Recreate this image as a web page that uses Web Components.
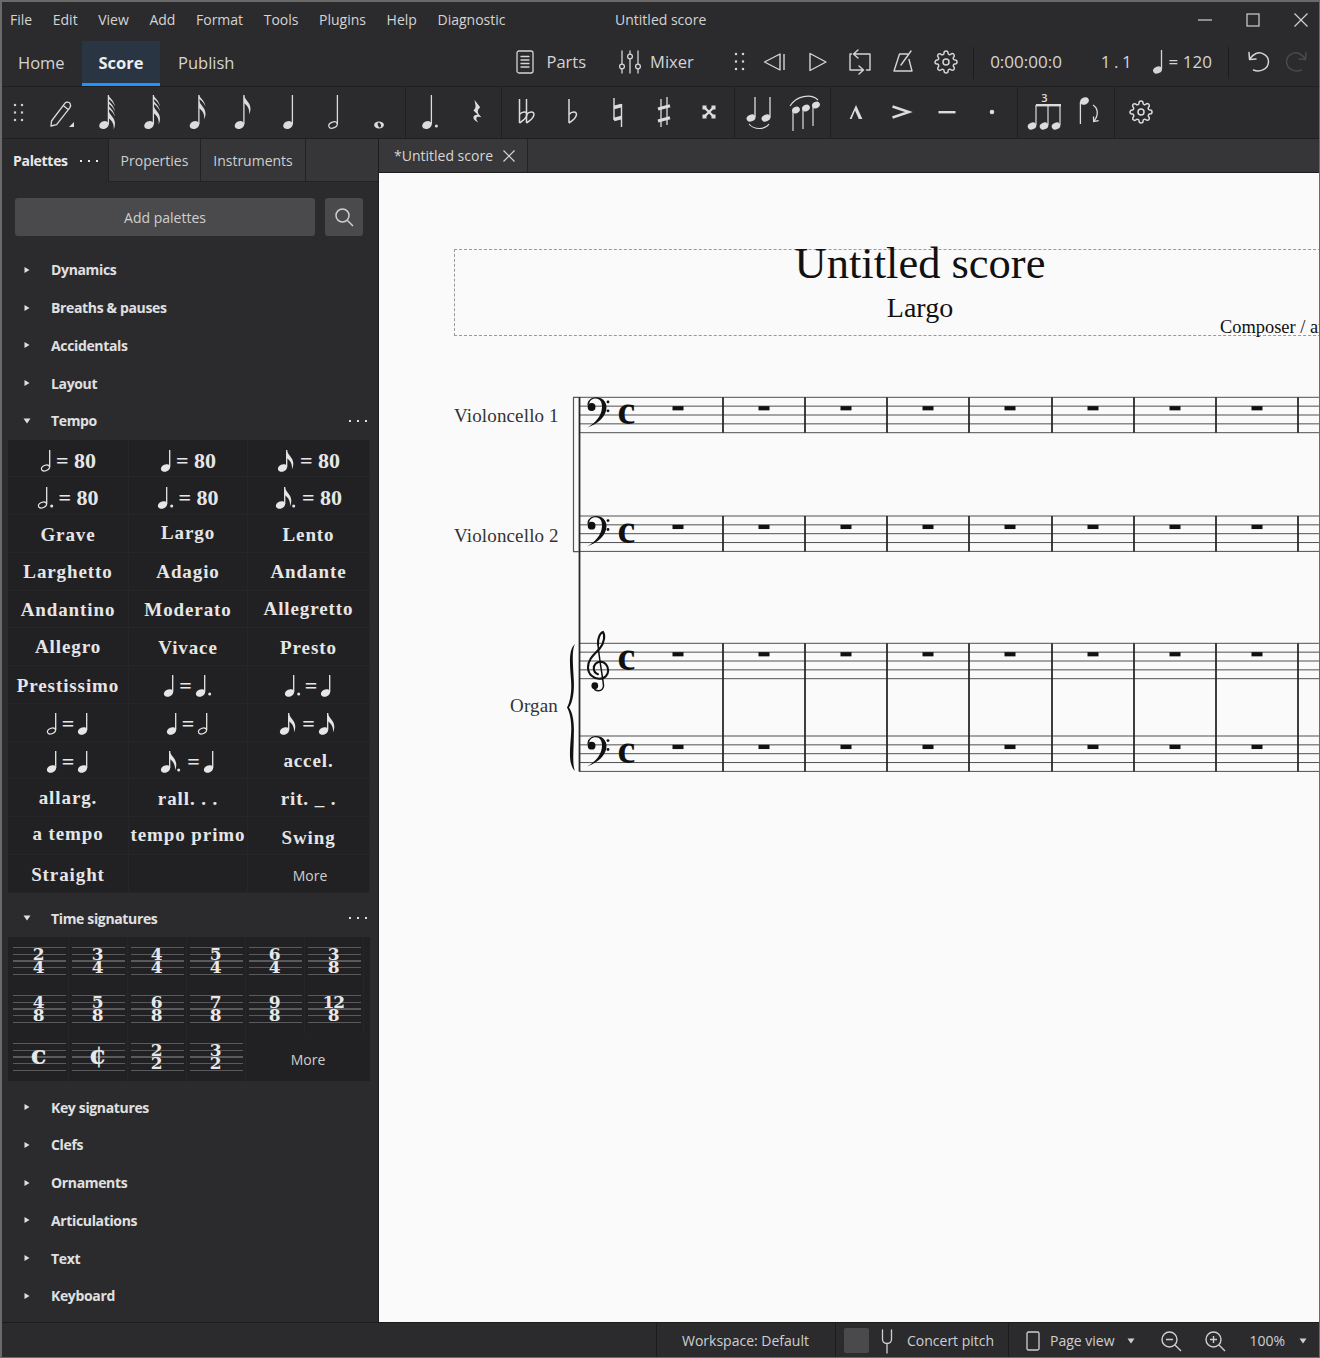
<!DOCTYPE html>
<html><head><meta charset="utf-8"><title>Untitled score</title>
<style>
html,body{margin:0;padding:0;background:#2b2b2e}
body{font-family:"Open Sans","Noto Sans",sans-serif;color:#d6d6d6}
</style></head>
<body>
<ms-app>
  <ms-menubar></ms-menubar>
  <ms-navbar></ms-navbar>
  <ms-toolbar></ms-toolbar>
  <ms-main>
    <ms-palettes slot="left">
      <ms-palette label="Dynamics"></ms-palette>
      <ms-palette label="Breaths &amp; pauses"></ms-palette>
      <ms-palette label="Accidentals"></ms-palette>
      <ms-palette label="Layout"></ms-palette>
      <ms-palette label="Tempo" open>
        <ms-tempo-grid>
          <ms-tempo-cell dy="3"><ms-icon name="th"></ms-icon>= 80</ms-tempo-cell>
          <ms-tempo-cell dy="3"><ms-icon name="tq"></ms-icon>= 80</ms-tempo-cell>
          <ms-tempo-cell dy="3"><ms-icon name="t8"></ms-icon>= 80</ms-tempo-cell>
          <ms-tempo-cell dy="2"><ms-icon name="thd"></ms-icon>= 80</ms-tempo-cell>
          <ms-tempo-cell dy="2"><ms-icon name="tqd"></ms-icon>= 80</ms-tempo-cell>
          <ms-tempo-cell dy="2"><ms-icon name="t8d"></ms-icon>= 80</ms-tempo-cell>
          <ms-tempo-cell word dy="1">Grave</ms-tempo-cell>
          <ms-tempo-cell word dy="-1">Largo</ms-tempo-cell>
          <ms-tempo-cell word dy="1">Lento</ms-tempo-cell>
          <ms-tempo-cell word>Larghetto</ms-tempo-cell>
          <ms-tempo-cell word>Adagio</ms-tempo-cell>
          <ms-tempo-cell word>Andante</ms-tempo-cell>
          <ms-tempo-cell word dy="1">Andantino</ms-tempo-cell>
          <ms-tempo-cell word dy="1">Moderato</ms-tempo-cell>
          <ms-tempo-cell word>Allegretto</ms-tempo-cell>
          <ms-tempo-cell word>Allegro</ms-tempo-cell>
          <ms-tempo-cell word dy="1">Vivace</ms-tempo-cell>
          <ms-tempo-cell word dy="1">Presto</ms-tempo-cell>
          <ms-tempo-cell word dy="1">Prestissimo</ms-tempo-cell>
          <ms-tempo-cell dy="2"><ms-icon name="tq"></ms-icon>=<ms-icon name="tqd"></ms-icon></ms-tempo-cell>
          <ms-tempo-cell dy="2"><ms-icon name="tqd"></ms-icon>=<ms-icon name="tq"></ms-icon></ms-tempo-cell>
          <ms-tempo-cell dy="2"><ms-icon name="th"></ms-icon>=<ms-icon name="tq"></ms-icon></ms-tempo-cell>
          <ms-tempo-cell dy="2"><ms-icon name="tq"></ms-icon>=<ms-icon name="th"></ms-icon></ms-tempo-cell>
          <ms-tempo-cell dy="2"><ms-icon name="t8"></ms-icon>=<ms-icon name="t8"></ms-icon></ms-tempo-cell>
          <ms-tempo-cell dy="2"><ms-icon name="tq"></ms-icon>=<ms-icon name="tq"></ms-icon></ms-tempo-cell>
          <ms-tempo-cell dy="2"><ms-icon name="t8d"></ms-icon>=<ms-icon name="tq"></ms-icon></ms-tempo-cell>
          <ms-tempo-cell word dy="1">accel.</ms-tempo-cell>
          <ms-tempo-cell word>allarg.</ms-tempo-cell>
          <ms-tempo-cell word dy="1">rall. . .</ms-tempo-cell>
          <ms-tempo-cell word dy="1">rit. _ .</ms-tempo-cell>
          <ms-tempo-cell word dy="-2">a tempo</ms-tempo-cell>
          <ms-tempo-cell word dy="-1">tempo primo</ms-tempo-cell>
          <ms-tempo-cell word dy="2">Swing</ms-tempo-cell>
          <ms-tempo-cell word dy="1">Straight</ms-tempo-cell>
          <ms-tempo-cell></ms-tempo-cell>
          <ms-tempo-cell more>More</ms-tempo-cell>
        </ms-tempo-grid>
      </ms-palette>
      <ms-palette label="Time signatures" open>
        <ms-time-grid>
          <ms-time-cell top="2" bottom="4"></ms-time-cell>
          <ms-time-cell top="3" bottom="4"></ms-time-cell>
          <ms-time-cell top="4" bottom="4"></ms-time-cell>
          <ms-time-cell top="5" bottom="4"></ms-time-cell>
          <ms-time-cell top="6" bottom="4"></ms-time-cell>
          <ms-time-cell top="3" bottom="8"></ms-time-cell>
          <ms-time-cell top="4" bottom="8"></ms-time-cell>
          <ms-time-cell top="5" bottom="8"></ms-time-cell>
          <ms-time-cell top="6" bottom="8"></ms-time-cell>
          <ms-time-cell top="7" bottom="8"></ms-time-cell>
          <ms-time-cell top="9" bottom="8"></ms-time-cell>
          <ms-time-cell top="12" bottom="8"></ms-time-cell>
          <ms-time-cell sym="c"></ms-time-cell>
          <ms-time-cell sym="¢"></ms-time-cell>
          <ms-time-cell top="2" bottom="2"></ms-time-cell>
          <ms-time-cell top="3" bottom="2"></ms-time-cell>
          <ms-time-more>More</ms-time-more>
        </ms-time-grid>
      </ms-palette>
      <ms-palette label="Key signatures"></ms-palette>
      <ms-palette label="Clefs"></ms-palette>
      <ms-palette label="Ornaments"></ms-palette>
      <ms-palette label="Articulations"></ms-palette>
      <ms-palette label="Text"></ms-palette>
      <ms-palette label="Keyboard"></ms-palette>
    </ms-palettes>
    <ms-doc slot="right"></ms-doc>
  </ms-main>
  <ms-statusbar></ms-statusbar>
</ms-app>
<script>
function noteBody(o){
  const {cx,cy,top,flags=0,hollow=false,dot=false,rx=5,ry=3.7,sw=1.3}=o;
  const sx=cx+rx-0.6;
  let s=`<line x1="${sx}" y1="${top}" x2="${sx}" y2="${cy-1}" stroke="currentColor" stroke-width="${sw}"/>`;
  s+=hollow
    ?`<ellipse cx="${cx}" cy="${cy}" rx="${rx-.6}" ry="${ry-.8}" transform="rotate(-24 ${cx} ${cy})" fill="none" stroke="currentColor" stroke-width="1.2"/>`
    :`<ellipse cx="${cx}" cy="${cy}" rx="${rx}" ry="${ry}" transform="rotate(-24 ${cx} ${cy})" fill="currentColor"/>`;
  for(let i=0;i<flags;i++){
    const y=top+i*5;
    if(i===flags-1) s+=`<path d="M${sx} ${y}c.8 5 6.4 7 6.6 13.5c0 2.5-.7 4.5-1.4 6c.7-4-.9-8.7-5.2-11.5Z" fill="currentColor"/>`;
    else s+=`<path d="M${sx} ${y}c1 3 5.6 5 6.6 11.5c-1.6-3.6-3.6-5.6-6.6-7.7Z" fill="currentColor"/>`;
  }
  if(dot) s+=`<circle cx="${sx+(flags?9:5)}" cy="${cy+1}" r="1.5" fill="currentColor"/>`;
  return s;
}
const GEAR='<circle cx="12" cy="12" r="3" fill="none" stroke="currentColor" stroke-width="1.5"/><path fill="none" stroke="currentColor" stroke-width="1.5" d="M19.4 15a1.65 1.65 0 0 0 .33 1.82l.06.06a2 2 0 0 1 0 2.83 2 2 0 0 1-2.83 0l-.06-.06a1.65 1.65 0 0 0-1.82-.33 1.65 1.65 0 0 0-1 1.51V21a2 2 0 0 1-2 2 2 2 0 0 1-2-2v-.09A1.65 1.65 0 0 0 9 19.4a1.65 1.65 0 0 0-1.82.33l-.06.06a2 2 0 0 1-2.83 0 2 2 0 0 1 0-2.83l.06-.06a1.65 1.65 0 0 0 .33-1.82 1.65 1.65 0 0 0-1.51-1H3a2 2 0 0 1-2-2 2 2 0 0 1 2-2h.09A1.65 1.65 0 0 0 4.6 9a1.65 1.65 0 0 0-.33-1.82l-.06-.06a2 2 0 0 1 0-2.83 2 2 0 0 1 2.83 0l.06.06a1.65 1.65 0 0 0 1.82.33H9a1.65 1.65 0 0 0 1-1.51V3a2 2 0 0 1 2-2 2 2 0 0 1 2 2v.09a1.65 1.65 0 0 0 1 1.51 1.65 1.65 0 0 0 1.82-.33l.06-.06a2 2 0 0 1 2.83 0 2 2 0 0 1 0 2.83l-.06.06a1.65 1.65 0 0 0-.33 1.82V9a1.65 1.65 0 0 0 1.51 1H21a2 2 0 0 1 2 2 2 2 0 0 1-2 2h-.09a1.65 1.65 0 0 0-1.51 1z"/>';
const dots6='<g fill="currentColor">'+[[2,3],[9,3],[2,10.5],[9,10.5],[2,18],[9,18]].map(p=>`<rect x="${p[0]-1.1}" y="${p[1]-1.1}" width="2.2" height="2.2"/>`).join('')+'</g>';
const flatP=x=>`<path d="M${x} 5V29M${x} 20.5c3-3.6 8-3.2 7.4.4c-.5 3-4 6-7.4 8.1" fill="none" stroke="currentColor" stroke-width="1.5"/>`;
const L='stroke="currentColor" fill="none" stroke-linecap="round" stroke-linejoin="round"';
const ICONS={
 grip:[11,21,dots6],
 pencil:[26,30,`<path ${L} stroke-width="1.3" d="M2.5 23 L16 5.2c1.3-1.7 4.2-1.2 5 .2c1 1.6 .7 3-.3 4.4L7.6 26.6 L2 28Z M14.2 7.6l5 3.8"/><path fill="currentColor" d="M25 24v5h-5Z"/>`],
 n64:[24,36,noteBody({cx:8,cy:31,top:1,flags:4})],
 n32:[24,36,noteBody({cx:8,cy:31,top:1,flags:3})],
 n16:[24,36,noteBody({cx:7.5,cy:31,top:1,flags:2})],
 n8:[24,36,noteBody({cx:7.5,cy:31,top:1,flags:1})],
 n4:[24,36,noteBody({cx:10,cy:31,top:1})],
 n2:[24,36,noteBody({cx:10,cy:31,top:1,hollow:true})],
 n1:[24,36,`<ellipse cx="10" cy="31" rx="4.9" ry="3.4" fill="currentColor"/><ellipse cx="10.4" cy="31" rx="1.5" ry="2.6" transform="rotate(-25 10.4 31)" fill="#2b2b2e"/>`],
 nd:[24,36,noteBody({cx:8,cy:31,top:1,dot:true})],
 rest:[24,36,`<path fill="currentColor" d="M9.5 6l5.7 7.2c-2.6 2.4-3.4 4.6-.7 7.8l1.8 2.2c-2.8-1.1-5-.6-5 1.4c0 1.4 .9 2.6 1.9 3.6c-3-1.1-5.2-3.3-4.7-5.5c.4-1.6 2.6-2.3 4.3-1.9L8.5 16.6c1.8-1.7 2.7-4 1.7-6.5Z"/>`],
 dflat:[24,36,flatP(4.5)+flatP(11.5)],
 flat:[24,36,flatP(8)],
 natural:[24,36,`<path fill="none" stroke="currentColor" stroke-width="1.4" d="M8 4V26M15.5 10V33"/><path stroke="currentColor" stroke-width="3.4" d="M8 13.5L15.5 11.5M8 25.5L15.5 23.5"/>`],
 sharp:[24,36,`<path fill="none" stroke="currentColor" stroke-width="1.3" d="M9 5V33M15 3V31"/><path stroke="currentColor" stroke-width="3" d="M6 15L18 11.8M6 27L18 23.800"/>`],
 dsharp:[24,36,`<path stroke="currentColor" stroke-width="2.4" d="M7.5 13.5L16.5 22.5M16.5 13.5L7.5 22.5"/><g fill="currentColor"><rect x="5.5" y="11.5" width="4" height="4"/><rect x="14.5" y="11.5" width="4" height="4"/><rect x="5.5" y="20.5" width="4" height="4"/><rect x="14.5" y="20.5" width="4" height="4"/></g>`],
 tie:[30,36,noteBody({cx:6,cy:24,top:3,rx:4.6,ry:3.4})+noteBody({cx:21,cy:24,top:3,rx:4.6,ry:3.4})+`<path d="M4 30c5 6 16 6 20 0" fill="none" stroke="currentColor" stroke-width="1.1"/>`],
 slur:[36,36,[6,16,26].map((x,i)=>{const y=[16,14,11][i];return `<ellipse cx="${x+3}" cy="${y}" rx="4" ry="3.2" transform="rotate(-24 ${x+3} ${y})" fill="currentColor"/><line x1="${x}" y1="${y}" x2="${x}" y2="${y+21}" stroke="currentColor" stroke-width="1.2"/>`}).join('')+`<path d="M3 12C9 2 24 -1 31 6" fill="none" stroke="currentColor" stroke-width="1.1"/>`],
 marcato:[24,24,`<path fill="currentColor" d="M12 5l6.4 14h-3.6L11 10.4 7.6 19H5.6Z"/>`],
 accent:[24,24,`<path d="M3.5 6.5L20 12L3.5 17.5" fill="none" stroke="currentColor" stroke-width="2.4"/>`],
 tenuto:[24,24,`<rect x="3.5" y="11" width="17" height="2.4" fill="currentColor"/>`],
 staccato:[24,24,`<circle cx="12" cy="12" r="2.3" fill="currentColor"/>`],
 tuplet:[38,40,`<text x="17.5" y="9.5" font-size="11" font-family="Open Sans" font-weight="600" fill="currentColor" text-anchor="middle">3</text>`+[5,17,29].map(x=>`<ellipse cx="${x}" cy="34" rx="4.4" ry="3.4" transform="rotate(-24 ${x} 34)" fill="currentColor"/><line x1="${x+4}" y1="33" x2="${x+4}" y2="13" stroke="currentColor" stroke-width="1.2"/>`).join('')+`<rect x="9" y="12" width="25" height="2.4" fill="currentColor"/>`],
 flip:[26,36,`<ellipse cx="6.5" cy="7" rx="4.6" ry="3.6" transform="rotate(-24 6.5 7)" fill="currentColor"/><line x1="2.4" y1="8" x2="2.4" y2="30" stroke="currentColor" stroke-width="1.3"/><path d="M15 11c5 3 6 10 1 16M15.5 22.5l.2 5 5-.8" fill="none" stroke="currentColor" stroke-width="1.3"/>`],
 gear:[24,24,GEAR],
 parts:[18,24,`<rect x="1" y="1" width="16" height="22" rx="2" ${L} stroke-width="1.3"/><path ${L} stroke-width="1.3" d="M5 6.5h8M5 10h8M5 13.5h8M5 17h8"/>`],
 mixer:[24,24,`<g ${L} stroke-width="1.3"><path d="M4 1v13M4 19v4M12 1v3M12 9v14M20 1v13M20 19v4"/><circle cx="4" cy="16.5" r="2.4"/><circle cx="12" cy="6.5" r="2.4"/><circle cx="20" cy="16.5" r="2.4"/></g>`],
 rewind:[24,22,`<path ${L} stroke-width="1.4" d="M17 3L1.500 11L17 19Z"/><path stroke="currentColor" stroke-width="1.4" d="M21 3V19"/>`],
 play:[20,22,`<path ${L} stroke-width="1.4" d="M2 2.500L18 11L2 19.500Z"/>`],
 loop:[24,26,`<path ${L} stroke-width="1.4" d="M3.500 5H2V21H15M11 17l4.500 4l-4.500 4M10 1L5.500 5L10 9M6 5H22V21H18.500"/>`],
 metro:[22,24,`<path ${L} stroke-width="1.4" d="M2 21L7.500 4H15.500M17 9.500L20 21H2M9 15L19 1"/>`],
 undo:[26,24,`<path ${L} stroke-width="1.5" d="M7.5 20c6 2.5 15-.5 15-8.5C22.500 5 15 1.500 10 3.500C7.500 4.500 5.500 6.500 3.500 9M3 2.500l.5 7l6.5-.5"/>`],
 wmin:[16,16,`<line x1="1" y1="8" x2="15" y2="8" stroke="currentColor" stroke-width="1.2"/>`],
 wmax:[16,16,`<rect x="2" y="2" width="12" height="12" fill="none" stroke="currentColor" stroke-width="1.2"/>`],
 wclose:[16,16,`<path d="M1.500 1.500L14.500 14.500M14.500 1.500L1.500 14.500" stroke="currentColor" stroke-width="1.2"/>`],
 tabclose:[14,14,`<path d="M1.500 1.500L12.500 12.500M12.500 1.500L1.500 12.500" stroke="currentColor" stroke-width="1.2"/>`],
 search:[20,20,`<circle cx="8.500" cy="8.500" r="6.500" ${L} stroke-width="1.5"/><path d="M13.500 13.500L19 19" stroke="currentColor" stroke-width="1.5"/>`],
 arrowR:[8,8,`<path d="M1.500 1L6.500 4L1.500 7Z" fill="currentColor"/>`],
 arrowD:[8,8,`<path d="M.5 1.500H7.500L4 6.500Z" fill="currentColor"/>`],
 more:[20,4,`<g fill="currentColor"><rect x="1" y="1" width="2" height="2"/><rect x="9" y="1" width="2" height="2"/><rect x="17" y="1" width="2" height="2"/></g>`],
 fork:[12,24,`<path ${L} stroke-width="1.3" d="M1.500 1v9c0 3 2 4.500 4.500 4.500S10.500 13 10.500 10V1M6 14.500V24"/>`],
 page:[14,20,`<rect x="1" y="1" width="12" height="18" rx="1.500" ${L} stroke-width="1.3"/>`],
 zoomout:[22,22,`<circle cx="9.500" cy="9.500" r="7.500" ${L} stroke-width="1.4"/><path d="M15 15L21 21M6 9.500h7" stroke="currentColor" stroke-width="1.4"/>`],
 zoomin:[22,22,`<circle cx="9.500" cy="9.500" r="7.500" ${L} stroke-width="1.4"/><path d="M15 15L21 21M6 9.500h7M9.500 6v7" stroke="currentColor" stroke-width="1.4"/>`],
 tq:[13,24,noteBody({cx:5.5,cy:19,top:1,rx:4.8,ry:3.5})],
 th:[13,24,noteBody({cx:5.5,cy:19,top:1,rx:4.8,ry:3.5,hollow:true})],
 t8:[20,24,noteBody({cx:5.5,cy:19,top:1,rx:4.8,ry:3.5,flags:1})],
 tqd:[18,24,noteBody({cx:5.5,cy:19,top:1,rx:4.8,ry:3.5,dot:true})],
 thd:[18,24,noteBody({cx:5.5,cy:19,top:1,rx:4.8,ry:3.5,hollow:true,dot:true})],
 t8d:[24,24,noteBody({cx:5.5,cy:19,top:1,rx:4.8,ry:3.5,flags:1,dot:true})],
 sq:[14,26,noteBody({cx:5.5,cy:21,top:1,rx:4.6,ry:3.4})],
};
class MsIcon extends HTMLElement{
  connectedCallback(){
    if(this.shadowRoot) return;
    const [w,h,b]=ICONS[this.getAttribute('name')];
    const r=this.attachShadow({mode:'open'});
    r.innerHTML=`<style>:host{display:inline-flex;flex:none;line-height:0}svg{display:block;overflow:visible}</style><svg width="${w}" height="${h}" viewBox="0 0 ${w} ${h}">${b}</svg>`;
  }
}
customElements.define('ms-icon',MsIcon);
function comp(name,html){
  customElements.define(name,class extends HTMLElement{
    constructor(){super();this.attachShadow({mode:'open'}).innerHTML=typeof html==='function'?'':html;}
    connectedCallback(){ if(typeof html==='function') this.shadowRoot.innerHTML=html(this); }
  });
}
const UI='"Open Sans","Noto Sans",sans-serif';
const SERIF='"Liberation Serif",serif';
const DSERIF='"DejaVu Serif",serif';

comp('ms-app',`<style>:host{display:flex;flex-direction:column;box-sizing:border-box;width:1320px;height:1358px;background:#2b2b2e;border:solid #6a6a6a;border-width:2px 1px 1px 2px;overflow:hidden;font-family:${UI};color:#d6d6d6}</style><slot></slot>`);

comp('ms-menubar',`<style>
:host{display:flex;align-items:center;height:35px;margin-bottom:2px;flex:none;font-size:14px;color:#d4d4d4;padding-left:8px;gap:20.6px}
.title{margin-left:89px}
.win{margin-left:auto;display:flex;gap:32px;padding-right:10px;color:#d0d0d0}
</style>
<span>File</span><span>Edit</span><span>View</span><span>Add</span><span>Format</span><span>Tools</span><span>Plugins</span><span>Help</span><span>Diagnostic</span>
<span class="title">Untitled score</span>
<div class="win"><ms-icon name="wmin"></ms-icon><ms-icon name="wmax"></ms-icon><ms-icon name="wclose"></ms-icon></div>`);

comp('ms-navbar',`<style>
:host{display:flex;align-items:center;height:47px;flex:none;border-bottom:1px solid #1f1f21;font-size:16.5px;color:#d4d4d4}
*{flex:none}
.tab{height:45px;align-self:flex-end;box-sizing:border-box;display:flex;align-items:center;padding:0 18px 2px}
.home{padding:0 17px 2px 16px;width:80px}
.on{background:#293543;border-bottom:3px solid #2093fe;font-weight:700;color:#eee;padding:0;width:78px;justify-content:center}
.parts{display:flex;align-items:center;gap:12px;margin:0 0 2px 264px}
.mix{display:flex;align-items:center;gap:8px;margin:0 0 2px 32px}
.pb{display:flex;margin:0 0 2px 38px;align-items:center}
.pb ms-icon{width:42.7px;justify-content:center}
.pb ms-icon.g{width:16px;margin-right:6px}
.sep{width:1px;height:32px;background:#1c1c1e}
.time{margin:0 0 2px 16px;display:flex;align-items:center;font-size:17px;white-space:nowrap}
.bar{margin-left:39px;word-spacing:-1px}
.tempo{margin-left:20px;display:flex;align-items:center;gap:3px}
.un{display:flex;gap:11px;margin:0 0 2px 17px}
.off{color:#4a4a4c}
.flipx{transform:scaleX(-1)}
</style>
<div class="tab home">Home</div><div class="tab on">Score</div><div class="tab">Publish</div>
<div class="parts"><ms-icon name="parts"></ms-icon><span>Parts</span></div>
<div class="mix"><ms-icon name="mixer"></ms-icon><span>Mixer</span></div>
<div class="pb"><ms-icon class="g" name="grip"></ms-icon><ms-icon name="rewind"></ms-icon><ms-icon name="play"></ms-icon><ms-icon name="loop"></ms-icon><ms-icon name="metro"></ms-icon><ms-icon name="gear"></ms-icon></div>
<div class="sep" style="margin-left:6px"></div>
<div class="time"><span>0:00:00:0</span><span class="bar">1 . 1</span><span class="tempo"><ms-icon name="sq"></ms-icon><span>= 120</span></span></div>
<div class="sep" style="margin-left:16px"></div>
<div class="un"><ms-icon name="undo"></ms-icon><ms-icon name="undo" class="off flipx"></ms-icon></div>`);

comp('ms-tool',`<style>:host{display:flex;align-items:center;justify-content:center;width:45.5px;height:50px;flex:none;color:#dcdcdc}</style><slot></slot>`);
comp('ms-toolbar',`<style>
:host{display:flex;height:52px;flex:none;border-bottom:1px solid #1f1f21;box-sizing:border-box}
.g{display:flex;border-right:1px solid #1f1f21;height:51px;margin-bottom:0}
.a{padding:0 1px 0 0}
.gr{width:37.5px;height:50px;box-sizing:border-box;padding-left:10.5px;display:flex;align-items:center;color:#ccc}
.pen{margin:2px 0 0 0}
</style>
<div class="g a"><div class="gr"><ms-icon name="grip"></ms-icon></div>
<ms-tool><ms-icon class="pen" name="pencil"></ms-icon></ms-tool><ms-tool><ms-icon name="n64"></ms-icon></ms-tool><ms-tool><ms-icon name="n32"></ms-icon></ms-tool><ms-tool><ms-icon name="n16"></ms-icon></ms-tool><ms-tool><ms-icon name="n8"></ms-icon></ms-tool><ms-tool><ms-icon name="n4"></ms-icon></ms-tool><ms-tool><ms-icon name="n2"></ms-icon></ms-tool><ms-tool><ms-icon name="n1"></ms-icon></ms-tool></div>
<div class="g" style="padding:0 1.5px 0 3px"><ms-tool><ms-icon name="nd"></ms-icon></ms-tool><ms-tool><ms-icon name="rest"></ms-icon></ms-tool></div>
<div class="g" style="padding:0 2px 0 2.5px"><ms-tool><ms-icon name="dflat"></ms-icon></ms-tool><ms-tool><ms-icon name="flat"></ms-icon></ms-tool><ms-tool><ms-icon name="natural"></ms-icon></ms-tool><ms-tool><ms-icon name="sharp"></ms-icon></ms-tool><ms-tool><ms-icon name="dsharp"></ms-icon></ms-tool></div>
<div class="g" style="padding:0 2px"><ms-tool><ms-icon name="tie"></ms-icon></ms-tool><ms-tool><ms-icon name="slur"></ms-icon></ms-tool></div>
<div class="g" style="padding:0 2px"><ms-tool><ms-icon name="marcato"></ms-icon></ms-tool><ms-tool><ms-icon name="accent"></ms-icon></ms-tool><ms-tool><ms-icon name="tenuto"></ms-icon></ms-tool><ms-tool><ms-icon name="staccato"></ms-icon></ms-tool></div>
<div class="g" style="padding:0 0 0 5px"><ms-tool><ms-icon name="tuplet"></ms-icon></ms-tool><ms-tool><ms-icon name="flip"></ms-icon></ms-tool></div>
<div class="g" style="border:none;padding-left:3px"><ms-tool><ms-icon name="gear"></ms-icon></ms-tool></div>`);

comp('ms-main',`<style>:host{display:flex;flex:1;min-height:0}</style><slot name="left"></slot><slot name="right"></slot>`);

comp('ms-palettes',`<style>
:host{display:flex;flex-direction:column;width:377px;flex:none;box-sizing:border-box;border-right:1px solid #1c1c1e;background:#2b2b2e}
.tabs{display:flex;height:43px;font-size:14px;flex:none;background:#363638;color:#cfcfcf;border-bottom:1px solid #232325;box-sizing:border-box}
.t{display:flex;align-items:center;justify-content:center;border-right:1px solid #222224;box-sizing:border-box}
.t1{width:107px;background:#2b2b2e;font-weight:700;color:#e8e8e8;justify-content:flex-start;padding-left:11px;gap:11px;margin-bottom:-1px;letter-spacing:-.3px}
.t2{width:92px}.t3{width:105px}
.add{display:flex;gap:10px;padding:16px 15px 15px 13px;flex:none}
.btn{height:38px;background:#4a4a4c;border-radius:3px;display:flex;align-items:center;justify-content:center;font-size:14px;color:#cfcfcf}
.b1{width:300px}.b2{width:38px}
</style>
<div class="tabs"><div class="t t1">Palettes<ms-icon name="more"></ms-icon></div><div class="t t2">Properties</div><div class="t t3">Instruments</div></div>
<div class="add"><div class="btn b1">Add palettes</div><div class="btn b2"><ms-icon name="search"></ms-icon></div></div>
<slot></slot>`);

comp('ms-palette',el=>`<style>
:host{display:block}
.h{display:flex;align-items:center;height:37.72px;font-size:14px;font-weight:700;color:#e0e0e0;letter-spacing:-.35px}
.a{width:8px;margin-left:21px;margin-right:20px;display:flex}
.m{margin-left:auto;margin-right:10px;display:${el.hasAttribute('open')?'flex':'none'}}
.g{display:${el.hasAttribute('open')?'block':'none'};padding:0 6px 7px 6px}
</style>
<div class="h"><span class="a"><ms-icon name="${el.hasAttribute('open')?'arrowD':'arrowR'}"></ms-icon></span><span>${el.getAttribute('label').replace('&','&amp;')}</span><span class="m"><ms-icon name="more"></ms-icon></span></div>
<div class="g"><slot></slot></div>`);

comp('ms-tempo-grid',`<style>:host{display:grid;grid-template-columns:121px 119px 122px;grid-auto-rows:37.75px;background:#212124;width:362px}</style><slot></slot>`);
comp('ms-tempo-cell',el=>{
  const word=el.hasAttribute('word'),more=el.hasAttribute('more'),dy=el.getAttribute('dy')||0;
  return `<style>:host{display:flex;align-items:center;justify-content:center;color:#e6e6e6;font:bold ${word?19:22}px/1 ${SERIF};letter-spacing:${word?.9:0}px;border-right:1px solid #262629;border-bottom:1px solid #262629;box-sizing:border-box;white-space:nowrap;${more?`font:14px ${UI};letter-spacing:0;padding:4px 0 0 3px;color:#cfcfcf;`:''}}
  .i{display:inline-flex;align-items:center;gap:3px;transform:translateY(${dy}px)}</style><span class="i"><slot></slot></span>`;
});
comp('ms-time-grid',`<style>:host{display:grid;grid-template-columns:repeat(6,59px);grid-auto-rows:48px;background:#212124;width:362px;box-sizing:border-box;padding-left:2px}</style><slot></slot>`);
comp('ms-time-cell',el=>{
  const s=el.getAttribute('sym');
  return `<style>:host{display:grid;align-items:center;border-right:1px solid #262629;box-sizing:border-box}
  .s{grid-area:1/1;height:28px;margin:0 2px 0 2.5px;background:repeating-linear-gradient(#5a5a5c 0 1.3px,transparent 1.3px 6.65px)}
  .n{grid-area:1/1;display:flex;flex-direction:column;align-items:center;font:bold 17px/13.3px ${DSERIF};color:#e8e8e8;letter-spacing:-1px;padding-right:1.5px}
  .c{font-size:26px;line-height:27px;padding-bottom:3px}</style>
  <div class="s"></div><div class="n">${s?`<span class="c">${s}</span>`:`<span>${el.getAttribute('top')}</span><span>${el.getAttribute('bottom')}</span>`}</div>`;
});
comp('ms-time-more',`<style>:host{grid-column:span 2;display:flex;align-items:center;justify-content:center;font-size:14px;color:#cfcfcf;padding:5px 0 0 6px}</style><slot></slot>`);

comp('ms-doc',`<style>
:host{display:flex;flex-direction:column;flex:1;min-width:0;background:#363638}
.bar{display:flex;height:34px;flex:none;background:#363638;border-bottom:1px solid #1e1e20;box-sizing:border-box}
.tab{width:149px;display:flex;align-items:center;gap:9px;padding-left:15px;box-sizing:border-box;font-size:14px;color:#d6d6d6;border-right:1px solid #232325;background:#38383a}
</style>
<div class="bar"><div class="tab"><span>*Untitled score</span><ms-icon name="tabclose"></ms-icon></div></div>
<ms-score></ms-score>`);

const OX=379,OY=173;
function staff(y,x0=579,x1=1320){let s='';for(let i=0;i<5;i++){const yy=y+i*8.85;s+=`<line x1="${x0}" x2="${x1}" y1="${yy}" y2="${yy}" stroke="#505050" stroke-width="1"/>`}return s}
const bars=[723,805,887,969,1052,1134,1216,1298], rests=[678,764,846,928,1010,1093,1175,1257];
function barsFor(y1,y2){return bars.map(x=>`<line x1="${x}" x2="${x}" y1="${y1}" y2="${y2}" stroke="#2a2a2a" stroke-width="1.8"/>`).join('')}
function restsFor(y){return rests.map(x=>`<rect x="${x-5.5}" y="${y+8.85}" width="11" height="4.2" fill="#111"/>`).join('')}
function bass(y){const x=585;return `<g transform="translate(${x} ${y})" fill="#111"><path d="M2 30.500C10 26 16.500 19 17 10.500C17.300 5 15 1.300 10.800 1.300C7.500 1.300 4.800 3 4.300 6L2.500 8.500C2 3.500 6 0 11 0C17 0 21.500 4 21.500 10C21.500 19 13 26.500 2 30.500Z"/><circle cx="6.600" cy="9.700" r="3.900"/><circle cx="23" cy="4.600" r="1.400"/><circle cx="23" cy="13.500" r="1.400"/></g>`}
function treble(y){return `<g transform="translate(587 ${y})" fill="none" stroke="#111" stroke-linecap="round"><path stroke-width="1.500" d="M6.500 55C8 60.500 15.500 60.500 16.500 54.500C16.800 52 12 26 11 13"/><path stroke-width="2.100" d="M11 13C10.500 6 13.500 .800 16 .300C18 3 17.800 11 12.500 17C7 23 1 27.500 1 35.500C1 43 7 47 12 47C18 47 21.200 43 21.200 38.500C21.200 33 17 30 13.500 30C9.500 30 6.500 33 6.800 37C7 40 9 42 11 42.500"/><circle cx="7.800" cy="54" r="3.400" fill="#111" stroke="none"/></g>`}
function ctime(y){return `<text x="617.500" y="${y+26.800}" font-family="Liberation Serif" font-weight="700" font-size="40" fill="#111">c</text>`}
const S1=397.3,S2=516,S3=643.3,S4=736;
const scoreSvg=`<svg width="941" height="1149" viewBox="${OX} ${OY} 941 1149">
${staff(S1)}${staff(S2)}${staff(S3)}${staff(S4)}
<line x1="579.500" x2="579.500" y1="397" y2="771.500" stroke="#2a2a2a" stroke-width="1.800"/>
<path d="M579 397.300H573.500V551.700H579" fill="none" stroke="#555" stroke-width="1.200"/>
<path d="M575 644C568 650 570 665 571 680C572 692 570 702 567 707.500C570 713 572 722 571 735C570 750 568 764 575 771C572 764 573.800 750 573.800 735C574.500 722 572.500 712 569 707.500C572.500 703 574.500 692 573.800 680C573 665 571.500 650 575 644Z" fill="#111"/>
${barsFor(S1,S1+35.4)}${barsFor(S2,S2+35.4)}${barsFor(S3,S4+35.4)}
${restsFor(S1)}${restsFor(S2)}${restsFor(S3)}${restsFor(S4)}
${bass(S1)}${bass(S2)}${treble(631.700)}${bass(S4)}
${ctime(S1)}${ctime(S2)}${ctime(S3)}${ctime(S4)}
</svg>`;
comp('ms-score',`<style>
:host{display:block;position:relative;flex:1;background:#fafafa;overflow:hidden;color:#111;font-family:${SERIF}}
svg{position:absolute;left:0;top:0}
.frame{position:absolute;left:75px;top:76px;width:932px;height:87px;box-sizing:border-box;border:1px dashed #999}
.title{position:absolute;left:0;right:0;top:-12px;text-align:center;font-size:44.5px;line-height:50px}
.sub{position:absolute;left:0;right:0;top:42px;text-align:center;font-size:28px;line-height:32px}
.comp{position:absolute;left:765px;top:67px;font-size:18.4px;line-height:20px;white-space:nowrap}
.lab{position:absolute;width:104px;left:75px;text-align:right;font-size:19px;line-height:22px;color:#333;white-space:nowrap;letter-spacing:.15px}
</style>
${scoreSvg}
<div class="frame"><div class="title">Untitled score</div><div class="sub">Largo</div><div class="comp">Composer / arranger</div></div>
<div class="lab" style="top:232px">Violoncello 1</div>
<div class="lab" style="top:352px">Violoncello 2</div>
<div class="lab" style="top:522px">Organ</div>`);

comp('ms-statusbar',`<style>
:host{display:flex;align-items:center;height:35px;flex:none;background:#2b2b2e;border-top:1px solid #1c1c1e;font-size:14px;color:#cfcfcf;box-sizing:border-box;padding-left:654px}
.sec{display:flex;align-items:center;height:100%;border-left:1px solid #1c1c1e;padding-top:1px}
.w{width:179px;padding-left:25px;box-sizing:border-box}
.c{width:173px;padding-left:8px;box-sizing:border-box}
.sw{width:25px;height:25px;background:#4a4a4c;border-radius:2px;margin-right:12px}
.cp{margin-left:14px}
.v{padding-left:17px;flex:1}
.pv{margin-left:10px;margin-right:12px}
.z1{margin-left:25px}.z2{margin-left:22px}
.pc{margin-left:24px;margin-right:14px}
</style>
<div class="sec w">Workspace: Default</div>
<div class="sec c"><div class="sw"></div><ms-icon name="fork"></ms-icon><span class="cp">Concert pitch</span></div>
<div class="sec v"><ms-icon name="page"></ms-icon><span class="pv">Page view</span><ms-icon name="arrowD"></ms-icon><ms-icon class="z1" name="zoomout"></ms-icon><ms-icon class="z2" name="zoomin"></ms-icon><span class="pc">100%</span><ms-icon name="arrowD"></ms-icon></div>`);
</script>
</body></html>
